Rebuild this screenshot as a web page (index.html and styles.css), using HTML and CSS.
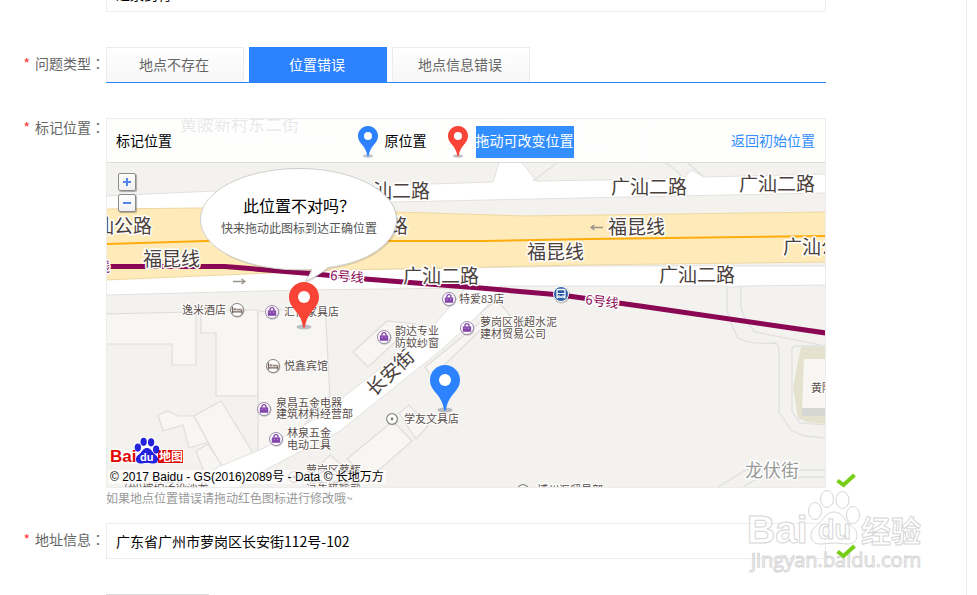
FILE: index.html
```html
<!DOCTYPE html>
<html lang="zh-CN">
<head>
<meta charset="utf-8">
<title>地点报错</title>
<link rel="stylesheet" href="styles.css">
</head>
<body>
<svg class="defs" aria-hidden="true">
  <symbol id="pin" viewBox="0 0 30 48">
    <ellipse cx="15" cy="45" rx="7.5" ry="2.6" fill="#5a6478" opacity=".38"/>
    <path d="M15 0C6.700 0 0 6.700 0 15c0 6 3.200 9.800 6.800 14 3.600 4.300 6.200 9 7.300 16.500h1.800C17 38 19.600 33.300 23.200 29 26.800 24.800 30 21 30 15 30 6.700 23.300 0 15 0z" fill="currentColor"/>
    <circle cx="15" cy="15" r="6" fill="#fff"/>
  </symbol>
  <symbol id="shop" viewBox="0 0 16 16">
    <circle cx="8.500" cy="8.700" r="7" fill="#000" opacity=".22"/>
    <circle cx="8" cy="8" r="6.500" fill="#fff" stroke="#9c86ab"/>
    <path d="M3.800 6.400h8.400v5.400H3.800z" fill="#8547ab"/>
    <path d="M6 6.800V5.600a2 2 0 0 1 4 0v1.200" fill="none" stroke="#8547ab" stroke-width="1.400"/>
    <path d="M6.300 7.800v.9M9.700 7.800v.9" stroke="#e8d8f2" stroke-width=".8"/>
  </symbol>
  <symbol id="hotel" viewBox="0 0 16 16">
    <circle cx="8.500" cy="8.700" r="7" fill="#000" opacity=".22"/>
    <circle cx="8" cy="8" r="6.500" fill="#fff" stroke="#8d8078"/>
    <path d="M3.500 4.500v7M3.500 9.800h9.200M12.700 7.500v4" stroke="#74625d" stroke-width="1.200"/>
    <path d="M4.500 6.200h3v2.300h-3zM8 6.700h4.700v1.800H8z" fill="#9b8883"/>
  </symbol>
  <symbol id="spot" viewBox="0 0 16 16">
    <circle cx="8.500" cy="8.500" r="6" fill="#000" opacity=".15"/>
    <circle cx="8" cy="8" r="5.300" fill="#fff" stroke="#8a8a88" stroke-width="1.200"/>
    <circle cx="8" cy="8" r="1.400" fill="#777"/>
  </symbol>
  <symbol id="paw" viewBox="-1 -1 54 56">
    <ellipse cx="7" cy="21" rx="6.500" ry="8.500"/>
    <ellipse cx="19" cy="9" rx="6.500" ry="8.500"/>
    <ellipse cx="34.500" cy="10" rx="6.500" ry="8.500"/>
    <ellipse cx="45" cy="25" rx="6.500" ry="8.500"/>
    <path d="M26 22C19 22 17 27 13 31.500 8 36.500 3 39 3 45.500 3 51 7 54 12 54 17 54 20 53 26 53S35 54 40 54C45 54 49 51 49 45.500 49 39 44 36.500 39 31.500 35 27 33 22 26 22z"/>
  </symbol>
  <symbol id="check" viewBox="0 0 20 16">
    <path d="M1.500 7.500 7.500 12 18.500 2" fill="none" stroke="#76cf16" stroke-width="4"/>
  </symbol>
</svg>

<main class="page">
  <form class="form">
    <div class="row row-first">
      <label class="label" for="place"></label>
      <div class="field"><input id="place" class="input" type="text" value="逸泉药行"></div>
    </div>

    <div class="row">
      <span class="label" id="kind"><i class="req">*</i>问题类型<span class="colon" lang="ja">：</span></span>
      <div class="field tabs" role="group" aria-labelledby="kind">
        <button type="button" class="tab">地点不存在</button>
        <button type="button" class="tab tab-on">位置错误</button>
        <button type="button" class="tab">地点信息错误</button>
      </div>
    </div>

    <div class="row">
      <span class="label label-top"><i class="req">*</i>标记位置<span class="colon" lang="ja">：</span></span>
      <div class="field">
        <div class="map">
          <svg class="canvas" viewBox="107 119 718 368" preserveAspectRatio="xMinYMin slice">
            <rect x="107" y="119" width="718" height="368" fill="#f3f2ee"/>
            <!-- buildings -->
            <g fill="#f7f6f2" stroke="#dfdedb" stroke-width="1.200">
              <path d="M100 314 196 312V365H172V344H100z"/>
              <path d="M201 310H258V396H216V333H201z"/>
              <path d="M258 312 325 306 330 396 300 430 258 452z"/>
              <path d="M158 415 168 411 178 416H194L208 442 189 448 183 425 163 431z"/>
              <path d="M194 416 221 401 253 453 222 467 208 442z"/>
              <path d="M196 451 208 444 228 475H205z"/>
              <path d="M353 352 387 321 415 324 368 367z"/>
              <path d="M425 367 478 324 490 320 470 340 432 377z"/>
              <path d="M399 413 409 405 428 426 416 439z"/>
              <path d="M347 459 393 421 412 441 370 478z"/>
              <path d="M310 475 330 455 352 473 335 487H310z"/>
              <path d="M480 313 497 300 510 315 494 325z"/>
            </g>
            <!-- white streets -->
            <g fill="#fff" stroke="#e2e1e0">
              <path d="M106 196 215 191 493 182 499 163V118H522V163L528 170 536 181 600 180 684 178 691 170 704 177 826 174V193L580 198 396 202 106 212z"/>
              <path d="M106 276 340 270 580 266 826 266V285L740 286 734 287H729L725 286 500 286 487 306 463 330 440 351 340 431 265 470 238 488H184L218 467 262 449 313 420 350 392 430 330 466 288 302 290 106 295z"/>
            </g>
            <!-- back roads -->
            <g fill="none" stroke="#e0e0e1" stroke-width="1.300">
              <path d="M727 286V310Q731 325 738 338Q750 345 776 343Q779 346 779 350V412L791 430 804 436 826 438"/>
              <path d="M741 286V308Q744 320 755 332L826 346H796Q792 346 792 350V411L800 423 826 425"/>
              <path d="M718 487 746 470H826M743 487 760 477H826M665 163Q674 167 682 177M688 163 704 177M533 181 557 163"/>
              <path d="M107 258 258 240M580 119V145Q600 150 620 155M650 119 640 161" opacity=".6"/>
              <path d="M220 142 320 140Q380 130 430 119M436 119 430 160M463 119 468 150" opacity=".8"/>
            </g>
            <path d="M801 347H826V424L807 422 798 418 793 387z" fill="#e4e1cf"/>
            <path d="M804 359H826V414H802z" fill="#f7f6f2"/>
            <path d="M802 408H826V416H802z" fill="#d6d6d4"/>
            <!-- highway -->
            <path d="M106 209 200 208 300 210 396 212 525 216 600 215 826 212V262L580 265 340 270 106 280z" fill="#ffebb9" stroke="#efd7a0"/>
            <path d="M106 244 206 241 484 241 590 239 826 236" fill="none" stroke="#ffad0e" stroke-width="2"/>
            <!-- metro -->
            <path d="M106 266.500H225L310 273.500 365 279 480 288 561 295 640 306 826 333" fill="none" stroke="#8a0753" stroke-width="5"/>
            <g fill="none" stroke="#9b948c" stroke-width="1.300">
              <path d="M603 227.500H591M594.500 225 591 227.500 594.500 230M233 281.500H245M241.500 279 245 281.500 241.500 284"/>
            </g>
            <g class="road-name">
              <text x="611" y="194">广汕二路</text>
              <text x="739" y="191">广汕二路</text>
              <text x="373" y="198">汕二路</text>
              <text x="403" y="283">广汕二路</text>
              <text x="659" y="282">广汕二路</text>
              <text x="95" y="233">汕公路</text>
              <text x="389" y="233">路</text>
              <text x="783" y="254">广汕公</text>
              <text x="143" y="266">福昆线</text>
              <text x="608" y="234">福昆线</text>
              <text x="527" y="259">福昆线</text>
              <text class="road-minor" x="745" y="477">龙伏街</text>
              <text class="road-old" x="180" y="131">黄陂新村东二街</text>
              <text transform="translate(374 397) rotate(-43)">长安街</text>
            </g>
            <g class="metro-name">
              <text transform="translate(330 280) rotate(4)">6号线</text>
              <text transform="translate(585 304) rotate(7)">6号线</text>
              <text x="97" y="271">线</text>
            </g>
            <circle cx="561.500" cy="295" r="8.500" fill="#000" opacity=".2"/>
            <circle cx="561" cy="294" r="7.500" fill="#2a5fa5" stroke="#fff"/>
            <path d="M557 290.500Q557 289.500 558 289.500H564Q565 289.500 565 290.500V297H557zM557.500 297v1.500M564.500 297v1.500" fill="none" stroke="#fff" stroke-width="1.300"/>
            <path d="M557 293.500h8M558.500 295.500h1M562.500 295.500h1" stroke="#fff" stroke-width="1.200"/>
            <g class="poi">
              <text x="182" y="314">逸米酒店</text>
              <text x="284" y="316">汇信家具店</text>
              <text x="459" y="303">特爱83店</text>
              <text x="480" y="326">萝岗区张超水泥</text>
              <text x="480" y="338">建材贸易公司</text>
              <text x="395" y="335">韵达专业</text>
              <text x="395" y="347">防蚊纱窗</text>
              <text x="284" y="370">悦鑫宾馆</text>
              <text x="276" y="407">泉昌五金电器</text>
              <text x="276" y="418">建筑材料经营部</text>
              <text x="287" y="437">林泉五金</text>
              <text x="287" y="449">电动工具</text>
              <text x="404" y="423">学友文具店</text>
              <text x="811" y="392">黄陂</text>
              <text x="306" y="474">萝岗区蔡辉</text>
              <text x="306" y="490">汽车维修部</text>
              <text x="124" y="492">(州)琥珀汤染沙龙</text>
              <text x="537" y="494">博州汇贸易部</text>
            </g>
            <use href="#shop" x="264" y="304" width="16" height="16"/>
            <use href="#shop" x="376" y="329" width="16" height="16"/>
            <use href="#shop" x="441" y="291" width="16" height="16"/>
            <use href="#shop" x="459" y="320" width="16" height="16"/>
            <use href="#shop" x="256" y="401" width="16" height="16"/>
            <use href="#shop" x="268" y="431" width="16" height="16"/>
            <use href="#hotel" x="229" y="302" width="16" height="16"/>
            <use href="#hotel" x="265" y="358" width="16" height="16"/>
            <use href="#spot" x="384" y="411" width="16" height="16"/>
            <use href="#spot" x="515" y="482" width="16" height="16"/>
            <use href="#spot" x="286" y="469" width="16" height="16"/>
            <!-- callout -->
            <path d="M299 168.500C353 168.500 397 191 397 219.500 397 244 366 263 328 267.500Q320 275 305 281.500 310 275 312 269.500C250 273 201 250 201 219.500 201 191 245 168.500 299 168.500z" transform="translate(1 1.500)" fill="#000" opacity=".13"/>
            <path d="M299 168.500C353 168.500 396.500 191 396.500 219.500 396.500 244 366 263 328 267.500Q320 275 305 281.500 310 275 312 269.500C250 273 200.500 250 200.500 219.500 200.500 191 245 168.500 299 168.500z" fill="#fff" stroke="#cfcecb"/>
            <text class="tip-title" x="243" y="212">此位置不对吗？</text>
            <text class="tip-text" x="221" y="233">快来拖动此图标到达正确位置</text>
            <use class="pin-new" href="#pin" x="289" y="282" width="30" height="48"/>
            <use class="pin-old" href="#pin" x="430" y="365" width="30" height="48"/>
            <!-- map provider logo -->
            <g class="brand">
              <use class="brand-halo" href="#paw" x="134" y="437" width="26" height="27"/>
              <text class="brand-red" x="110" y="462">Bai</text>
              <rect x="157.500" y="449.500" width="26" height="14" fill="#e10601" stroke="#fff"/>
              <use class="brand-paw" href="#paw" x="134" y="437" width="26" height="27"/>
              <text class="brand-du" x="140" y="461">du</text>
              <text class="brand-map" x="159" y="461">地图</text>
            </g>
          </svg>
          <div class="bar">
            <span class="bar-text">标记位置</span>
            <div class="legend">
              <svg class="mark pin-old" aria-hidden="true"><use href="#pin"/></svg>
              <span class="bar-text legend-old">原位置</span>
              <svg class="mark pin-new" aria-hidden="true"><use href="#pin"/></svg>
              <span class="bar-text selected">拖动可改变位置</span>
            </div>
            <a class="bar-text reset" href="#">返回初始位置</a>
          </div>
          <div class="zoom">
            <button type="button" class="zoom-btn" aria-label="放大"><svg viewBox="0 0 8 8"><path d="M0 4h8M4 0v8"/></svg></button>
            <button type="button" class="zoom-btn" aria-label="缩小"><svg viewBox="0 0 8 8"><path d="M0 4h8"/></svg></button>
          </div>
          <div class="credit">© 2017 Baidu - GS(2016)2089号 - Data © 长地万方</div>
        </div>
        <svg class="check check-map" aria-hidden="true"><use href="#check"/></svg>
        <p class="hint">如果地点位置错误请拖动红色图标进行修改哦~</p>
      </div>
    </div>

    <div class="row row-near">
      <label class="label" for="addr"><i class="req">*</i>地址信息<span class="colon" lang="ja">：</span></label>
      <div class="field">
        <input id="addr" class="input" type="text" value="广东省广州市萝岗区长安街112号-102">
        <svg class="watermark" viewBox="0 0 180 90" aria-hidden="true">
          <text class="wm-big" x="0" y="55">Bai</text>
          <use class="wm-paw" href="#paw" x="60" y="1" width="54" height="56"/>
          <text class="wm-du" x="71" y="51">du</text>
          <text class="wm-cjk" x="114" y="54">经验</text>
          <text class="wm-url" x="4" y="79">jingyan.baidu.com</text>
        </svg>
        <svg class="check check-addr" aria-hidden="true"><use href="#check"/></svg>
      </div>
    </div>

    <div class="row">
      <span class="label"></span>
      <div class="field"><button type="button" class="upload">上传图片</button></div>
    </div>
  </form>
</main>
</body>
</html>
```
FILE: styles.css
```css
* { box-sizing: border-box; }

body {
  margin: 0;
  background: #fff;
  color: #000;
  font: 14px/20px "Noto Sans CJK SC", "Noto Sans", sans-serif;
}

.defs { position: absolute; width: 0; height: 0; }

.page {
  height: 100vh;
  overflow: hidden;
  margin-right: 10px;
  padding-right: 140px;
  border-right: 1px solid #ececec;
}

.row {
  display: grid;
  grid-template-columns: 106px minmax(0, 1fr);
  margin-top: 35px;
}
.row-first { margin-top: -24px; }
.row-near { margin-top: 15px; }

.label {
  padding-right: 1px;
  color: #666;
  line-height: 32px;
  text-align: right;
  white-space: nowrap;
}
.label-top { line-height: 18px; }
.req { margin-right: 5px; color: #f33; font-style: normal; }
.colon { font-family: "Noto Sans CJK JP", sans-serif; }

.field { position: relative; }

.input {
  display: block;
  width: 100%;
  height: 36px;
  padding: 0 9px;
  border: 1px solid #ececec;
  background: #fff;
  color: #000;
  font: inherit;
}

.tabs {
  display: flex;
  gap: 5px;
  border-bottom: 1px solid #2d82ff;
}
.tab {
  width: 138px;
  height: 35px;
  padding: 0 2px 2px 0;
  border: 1px solid #ececec;
  border-bottom: 0;
  background: linear-gradient(#fff, #f6f6f6);
  color: #666;
  font: inherit;
}
.tab-on { border-color: #2d82ff; background: #2d82ff; color: #fff; }

.map {
  position: relative;
  display: grid;
  border: 1px solid #ececec;
  overflow: hidden;
}
.canvas { grid-area: 1 / 1; display: block; width: 100%; height: 368px; }
.bar {
  grid-area: 1 / 1;
  align-self: start;
  position: relative;
  display: grid;
  grid-template-columns: 1fr auto 1fr;
  align-items: center;
  height: 44px;
  padding: 2px 10px 0 9px;
  border-bottom: 1px solid #dcdcdc;
  background: rgba(255, 255, 255, .88);
}
.bar-text { padding-bottom: 4px; line-height: 28px; }
.legend { display: flex; align-items: center; }
.mark { width: 20px; height: 32px; }
.legend-old { margin: 0 21px 0 7px; }
.selected { margin-left: 8px; background: #338fff; color: #fff; }
.reset { justify-self: end; color: #338fff; text-decoration: none; }
.pin-old { color: #2d82ff; }
.pin-new { color: #f94336; }

.zoom { position: absolute; top: 54px; left: 11px; display: grid; gap: 3px; }
.zoom-btn {
  display: grid;
  place-items: center;
  width: 18px;
  height: 18px;
  padding: 0;
  border: 1px solid #8b8b8b;
  border-radius: 2px;
  background: linear-gradient(#fff, #f0f0f0);
  box-shadow: 1px 1px 1px rgba(0, 0, 0, .3);
}
.zoom-btn svg { width: 8px; height: 8px; fill: none; stroke: #4f84ea; stroke-width: 2; }

.credit {
  position: absolute;
  bottom: 3px;
  left: 1px;
  padding: 0 2px;
  background: rgba(255, 255, 255, .7);
  font: 12px/14px "Liberation Sans", "Noto Sans CJK SC", sans-serif;
  white-space: nowrap;
}

.hint { margin: 0; color: #999; font-size: 12px; }

.road-name text,
.metro-name text,
.poi text { paint-order: stroke; stroke: #fff; stroke-linejoin: round; }
.road-name { fill: #4b413c; font-size: 19px; stroke-width: 3px; }
.road-name .road-minor { fill: #9a9a98; font-size: 18px; }
.road-name .road-old { fill: #4b413c; font-size: 17px; }
.metro-name { fill: #8a0753; font-size: 13px; stroke-width: 3px; }
.poi { fill: #5a4e4a; font-size: 11px; stroke-width: 2px; }
.tip-title { font-size: 16px; }
.tip-text { fill: #555; font-size: 12px; }

.brand { font-family: "Liberation Sans", "Noto Sans CJK SC", sans-serif; font-weight: 700; }
.brand-red { paint-order: stroke; fill: #e10601; font-size: 17px; stroke: #fff; stroke-width: 3px; }
.brand-halo { fill: #fff; stroke: #fff; stroke-width: 7px; }
.brand-paw { fill: #2422dc; }
.brand-du { fill: #fff; font-size: 11px; }
.brand-map { fill: #fff; font-size: 12px; }

.check { position: absolute; right: -30px; width: 20px; height: 16px; }
.check-map { top: 355px; }
.check-addr { top: 21px; }

.watermark {
  position: absolute;
  top: -35px;
  right: -101px;
  width: 180px;
  height: 90px;
  pointer-events: none;
  font-family: "Liberation Sans", "Noto Sans CJK SC", sans-serif;
  fill: rgba(255, 255, 255, .6);
  stroke: #d6d6d6;
}
.wm-big { font-size: 39px; font-weight: 700; }
.wm-du { font-size: 27px; font-weight: 700; }
.wm-cjk { font-size: 30px; font-weight: 700; }
.wm-url { font-family: "Open Sans", sans-serif; font-size: 20px; }

.upload {
  width: 103px;
  height: 36px;
  border: 1px solid #dcdcdc;
  background: #fff;
  color: #666;
  font: inherit;
}
```
